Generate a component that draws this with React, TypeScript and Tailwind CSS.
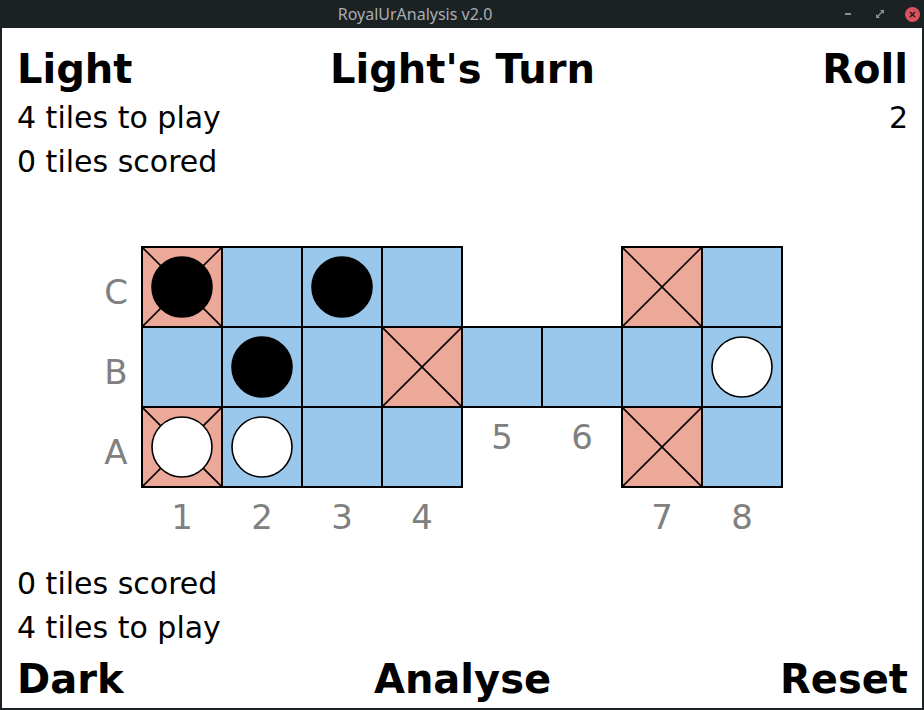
import React from "react";

type Piece = "black" | "white" | null;

const ROWS = ["C", "B", "A"];
const PRESENT: Record<string, number[]> = {
  C: [1, 2, 3, 4, 7, 8],
  B: [1, 2, 3, 4, 5, 6, 7, 8],
  A: [1, 2, 3, 4, 7, 8],
};
const ROSETTES = new Set(["C1", "C7", "B4", "A1", "A7"]);
const PIECES: Record<string, Piece> = {
  C1: "black",
  C3: "black",
  B2: "black",
  A1: "white",
  A2: "white",
  B8: "white",
};

function Cell({ id }: { id: string }) {
  const rosette = ROSETTES.has(id);
  const piece = PIECES[id] ?? null;
  return (
    <div
      className={`relative w-[80px] h-[80px] outline-2 outline-black -outline-offset-1 ${
        rosette ? "bg-[#eca898]" : "bg-[#99c8ec]"
      }`}
    >
      <svg className="absolute inset-0" width="80" height="80" viewBox="0 0 80 80">
        {rosette && (
          <>
            <line x1="0" y1="0" x2="80" y2="80" stroke="#000" strokeWidth="1.6" />
            <line x1="80" y1="0" x2="0" y2="80" stroke="#000" strokeWidth="1.6" />
          </>
        )}
        {piece && (
          <circle
            cx="40"
            cy="40"
            r="30"
            fill={piece === "black" ? "#000" : "#fff"}
            stroke="#000"
            strokeWidth="1.6"
          />
        )}
      </svg>
    </div>
  );
}

function Board() {
  return (
    <div className="flex flex-col ml-[73px]">
      {ROWS.map((r) => (
        <div key={r} className="flex h-[80px]">
          <div className="w-[52px] h-[80px] flex items-center justify-center pt-[10px] text-[34px] text-[#808080]">
            {r}
          </div>
          {[1, 2, 3, 4, 5, 6, 7, 8].map((c) => {
            const id = `${r}${c}`;
            if (PRESENT[r].includes(c)) return <Cell key={id} id={id} />;
            if (r === "A")
              return (
                <div key={id} className="w-[80px] h-[60px] flex items-center justify-center pt-[1px] text-[34px] text-[#808080]">
                  {c}
                </div>
              );
            return <div key={id} className="w-[80px] h-[80px]" />;
          })}
        </div>
      ))}
      <div className="flex h-[60px]">
        <div className="w-[52px]" />
        {[1, 2, 3, 4, 5, 6, 7, 8].map((c) => (
          <div key={c} className="w-[80px] h-[60px] flex items-center justify-center pt-[1px] text-[34px] text-[#808080]">
            {c === 5 || c === 6 ? "" : c}
          </div>
        ))}
      </div>
    </div>
  );
}

export default function App() {
  return (
    <div
      className="w-[924px] h-[710px] bg-[#1c2124] flex flex-col overflow-hidden"
      style={{ fontFamily: '"DejaVu Sans", sans-serif' }}
    >
      {/* title bar */}
      <div className="h-[28px] flex items-center shrink-0">
        <div
          className="flex-1 text-center text-[16px] text-[#a7aeb3] leading-[28px]"
          style={{ fontFamily: '"Noto Sans", sans-serif' }}
        >
          RoyalUrAnalysis v2.0
        </div>
        <div className="w-[94px] h-[28px] flex items-center">
          <div className="w-[6px] h-[2px] bg-[#8c9296] ml-[15px]" />
          <svg className="ml-[25px]" width="8" height="8" viewBox="0 0 8 8">
            <path d="M4 0 H8 V4 Z" fill="#8c9296" />
            <path d="M0 4 V8 H4 Z" fill="#8c9296" />
            <path d="M1.5 6.5 L6.5 1.5" stroke="#8c9296" strokeWidth="1.4" />
          </svg>
          <div className="ml-[21px] w-[15px] h-[15px] rounded-full bg-[#d9535f] flex items-center justify-center">
            <svg width="7" height="7" viewBox="0 0 7 7">
              <path d="M1 1 L6 6 M6 1 L1 6" stroke="#2a1a1c" strokeWidth="1.6" />
            </svg>
          </div>
        </div>
      </div>

      {/* content */}
      <div className="flex-1 mx-[2px] mb-[2px] bg-white flex flex-col pl-[15px] pr-[14px] pt-[17px] text-black">
        <div className="grid grid-cols-3 h-[48px] text-[40px] font-bold leading-[48px]">
          <div>Light</div>
          <div className="text-center whitespace-nowrap">Light's Turn</div>
          <div className="text-right">Roll</div>
        </div>
        <div className="mt-[3px] flex justify-between h-[44px] text-[30px] leading-[44px]">
          <div>4 tiles to play</div>
          <div>2</div>
        </div>
        <div className="h-[44px] text-[30px] leading-[44px]">0 tiles scored</div>

        <div className="pt-[63px]">
          <Board />
        </div>

        <div className="flex-1" />

        <div className="h-[44px] text-[30px] leading-[44px]">0 tiles scored</div>
        <div className="h-[44px] text-[30px] leading-[44px]">4 tiles to play</div>
        <div className="mt-[5px] mb-[5px] grid grid-cols-3 h-[48px] text-[40px] font-bold leading-[48px]">
          <div>Dark</div>
          <div className="text-center">Analyse</div>
          <div className="text-right">Reset</div>
        </div>
      </div>
    </div>
  );
}
